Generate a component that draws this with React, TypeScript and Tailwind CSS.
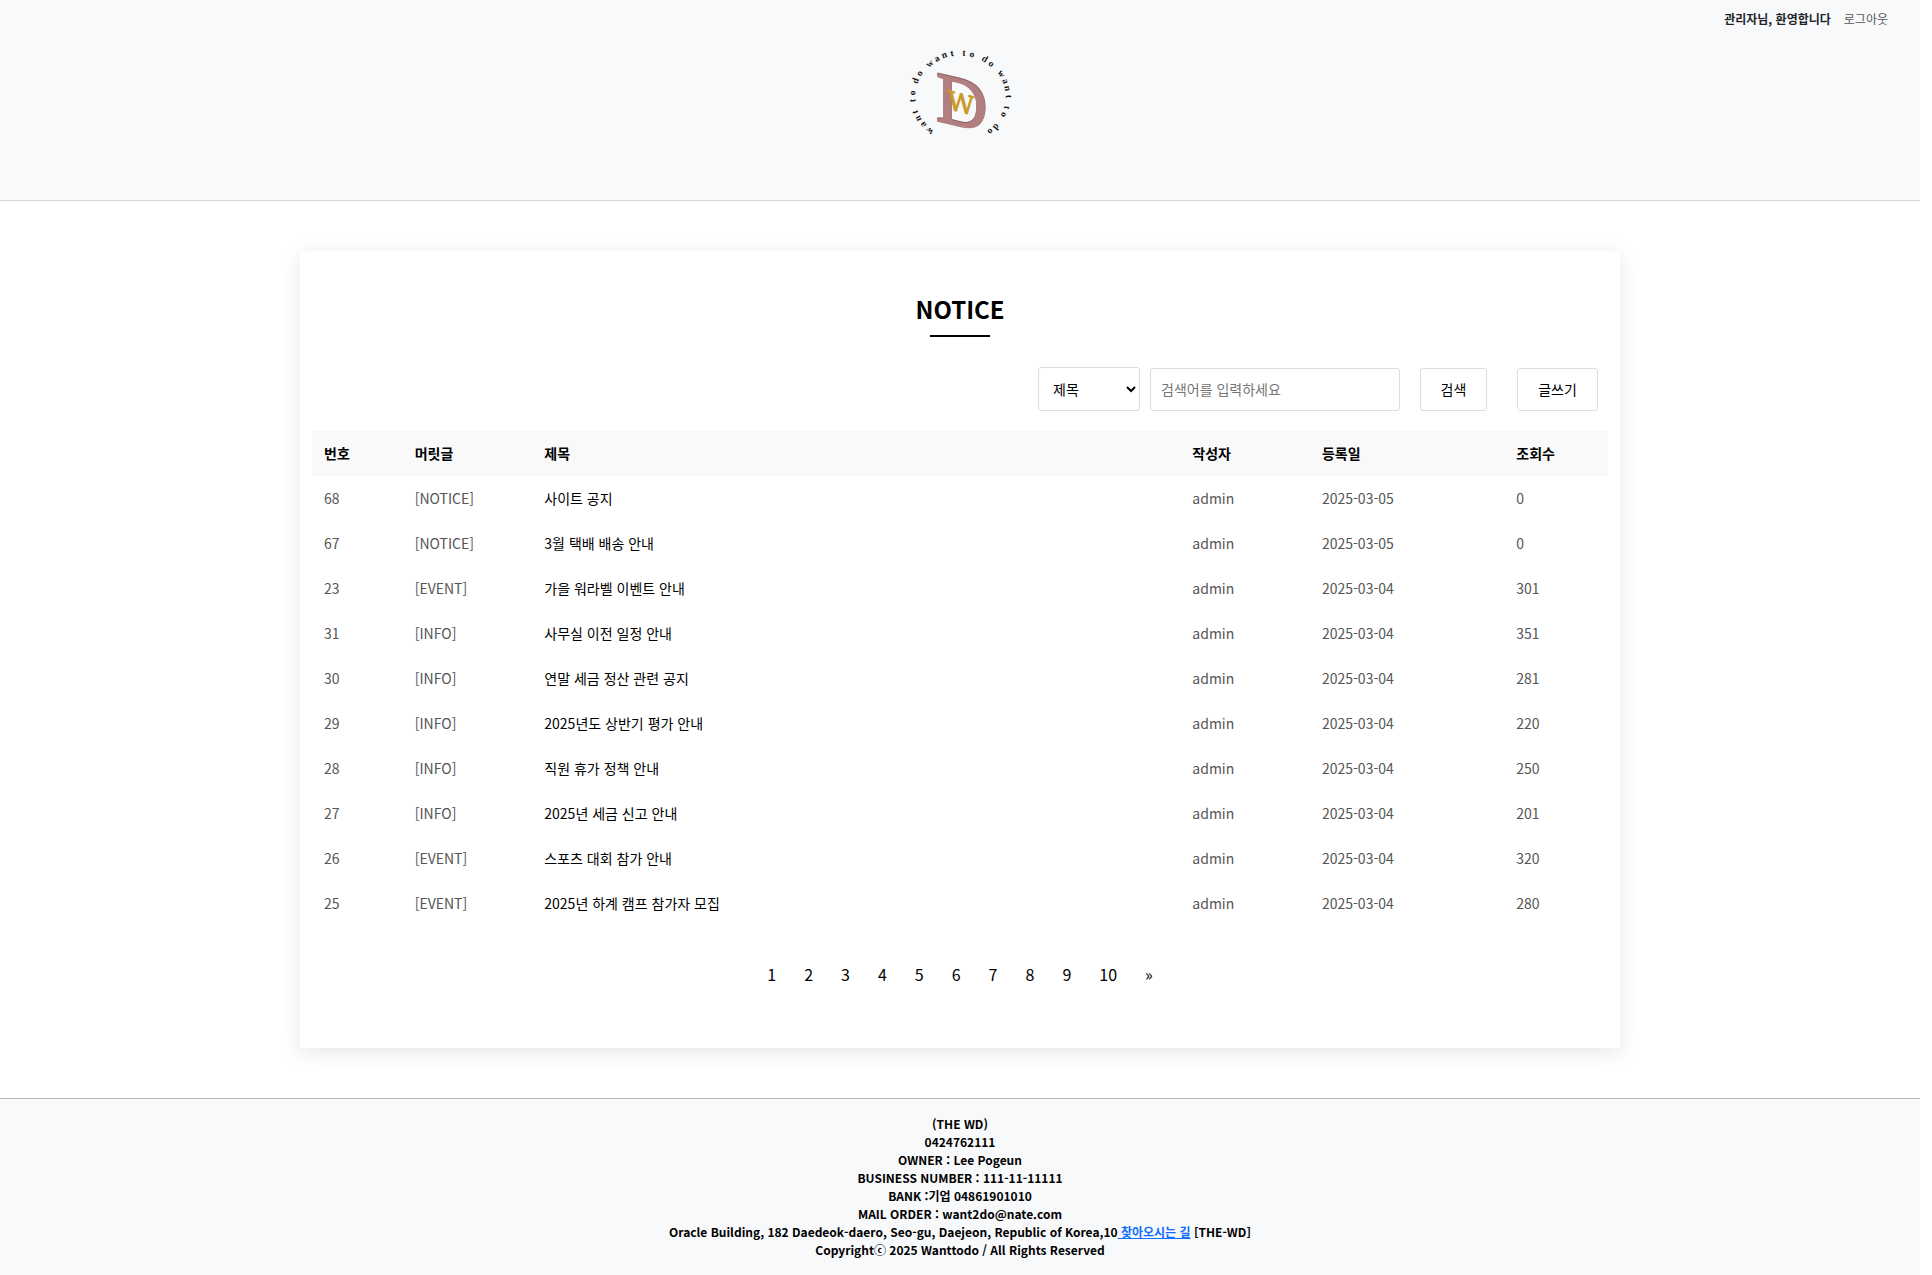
import React from "react";

const rows: [string, string, string, string, string][] = [
  ["68", "[NOTICE]", "사이트 공지", "2025-03-05", "0"],
  ["67", "[NOTICE]", "3월 택배 배송 안내", "2025-03-05", "0"],
  ["23", "[EVENT]", "가을 워라벨 이벤트 안내", "2025-03-04", "301"],
  ["31", "[INFO]", "사무실 이전 일정 안내", "2025-03-04", "351"],
  ["30", "[INFO]", "연말 세금 정산 관련 공지", "2025-03-04", "281"],
  ["29", "[INFO]", "2025년도 상반기 평가 안내", "2025-03-04", "220"],
  ["28", "[INFO]", "직원 휴가 정책 안내", "2025-03-04", "250"],
  ["27", "[INFO]", "2025년 세금 신고 안내", "2025-03-04", "201"],
  ["26", "[EVENT]", "스포츠 대회 참가 안내", "2025-03-04", "320"],
  ["25", "[EVENT]", "2025년 하계 캠프 참가자 모집", "2025-03-04", "280"],
];

const pages = ["1", "2", "3", "4", "5", "6", "7", "8", "9", "10", "»"];

// Centre of each letter on the logo's ring
const ring: [string, number, number][] = [
  ["w", 40, 100.5], ["a", 33.5, 94.5], ["n", 28.5, 88.5], ["t", 25.5, 82],
  ["t", 23, 70.5], ["o", 23, 63],
  ["d", 26, 51], ["o", 30, 43.5],
  ["w", 40, 34], ["a", 47, 29], ["n", 54.5, 25.5], ["t", 62, 24],
  ["t", 74, 23.5], ["o", 82, 25],
  ["d", 94.5, 29.5], ["o", 101, 34],
  ["w", 111, 44], ["a", 115, 51.5], ["n", 117, 58.5], ["t", 118, 66.5],
  ["t", 116.5, 77.5], ["o", 113.5, 84.5],
  ["d", 106, 96.5], ["o", 100, 101],
];

function Logo() {
  return (
    <svg className="block h-[120px] w-[150px]" viewBox="0 0 150 120">
      <g fontFamily="'Liberation Serif', serif" fontWeight="700" fontSize="9.5" fill="#111" textAnchor="middle">
        {ring.map(([ch, x, y], i) => {
          const angle = (Math.atan2(y - 68, x - 70.5) * 180) / Math.PI + 90;
          return (
            <text key={i} transform={`translate(${x} ${y}) rotate(${angle.toFixed(1)})`} y="2.3">
              {ch}
            </text>
          );
        })}
      </g>
      <g fontFamily="'Liberation Serif', serif" fontSize="71" strokeWidth="1.8">
        <text transform="translate(46.3 89.5) skewY(13)" fill="#8d6063" stroke="#8d6063">D</text>
        <text transform="translate(46 90.5) skewY(13)" fill="#b27f80" stroke="#b27f80">D</text>
      </g>
      <text
        transform="translate(57.5 79) skewY(14)"
        fontFamily="'DejaVu Serif', serif"
        fontSize="26"
        fill="#cb9a27"
        stroke="#cb9a27"
        strokeWidth="0.9"
      >
        W
      </text>
    </svg>
  );
}

export default function App() {
  return (
    <div lang="ko" className="h-[1275px] w-[1932px] overflow-hidden bg-white font-['Noto_Sans_CJK_KR',sans-serif] text-black">
      <div className="flex h-full w-[1920px] flex-col">
        <header className="flex h-[201px] flex-col items-center border-b border-[#d5d8db] bg-[#f8f9fb]">
          <div className="flex h-[30px] items-end gap-[13px] self-end pr-[32px] text-[12px] leading-[22px]">
            <span className="font-bold text-[#212529]">관리자님, 환영합니다</span>
            <a className="text-[#555]">로그아웃</a>
          </div>
          <div className="ml-[10px]">
            <Logo />
          </div>
        </header>

        <main className="mx-auto mt-[50px] flex h-[797px] w-[1320px] flex-col bg-white px-3 shadow-[0_4px_20px_rgba(0,0,0,0.1)]">
          <h1 className="mt-10 text-center text-[24px] leading-[36px] font-bold">NOTICE</h1>
          <div className="mx-auto mt-2 h-[2px] w-[60px] bg-black" />

          <div className="mt-[30px] flex h-[44px] items-end justify-end pr-[10px] text-[14px]">
            <div className="flex h-[44px] w-[102px] items-center justify-between rounded-[3px] border border-[#ddd] pr-[3px] pl-[14px]">
              <span>제목</span>
              <svg className="h-[10px] w-[10px]" viewBox="0 0 10 10" fill="none" stroke="#000" strokeWidth="2">
                <path d="M1 3 L5 7 L9 3" />
              </svg>
            </div>
            <div className="ml-[10px] flex h-[43px] w-[250px] items-center rounded-[3px] border border-[#ddd] pl-[10px] text-[#757575]">
              검색어를 입력하세요
            </div>
            <button className="ml-[20px] h-[43px] w-[67px] rounded-[3px] border border-[#ddd]">검색</button>
            <button className="ml-[30px] h-[43px] w-[81px] rounded-[3px] border border-[#ddd]">글쓰기</button>
          </div>

          <table className="mt-5 w-full table-fixed border-collapse text-left text-[14px] leading-[21px]">
            <colgroup>
              <col className="w-[7%]" />
              <col className="w-[10%]" />
              <col className="w-[50%]" />
              <col className="w-[10%]" />
              <col className="w-[15%]" />
              <col className="w-[8%]" />
            </colgroup>
            <thead>
              <tr className="h-[45px] bg-[#f9f9f9]">
                {["번호", "머릿글", "제목", "작성자", "등록일", "조회수"].map((h) => (
                  <th key={h} className="px-3 font-bold">{h}</th>
                ))}
              </tr>
            </thead>
            <tbody>
              {rows.map(([no, tag, title, date, views]) => (
                <tr key={no} className="h-[45px] text-[#555]">
                  <td className="px-3">{no}</td>
                  <td className="px-3">{tag}</td>
                  <td className="px-3 text-black">{title}</td>
                  <td className="px-3">admin</td>
                  <td className="px-3">{date}</td>
                  <td className="px-3">{views}</td>
                </tr>
              ))}
            </tbody>
          </table>

          <nav className="mt-[36px] flex justify-center text-[16px] leading-[24px]">
            {pages.map((p) => (
              <a key={p} className="px-[14px]">{p}</a>
            ))}
          </nav>
        </main>

        <footer className="mt-auto h-[177px] border-t border-[#b9b9b9] bg-[#f8f9fb] pt-[16px] text-center text-[12px] leading-[18px] font-bold">
          <p>(THE WD)</p>
          <p>0424762111</p>
          <p>OWNER : Lee Pogeun</p>
          <p>BUSINESS NUMBER : 111-11-11111</p>
          <p>BANK :기업 04861901010</p>
          <p>MAIL ORDER : want2do@nate.com</p>
          <p>
            Oracle Building, 182 Daedeok-daero, Seo-gu, Daejeon, Republic of Korea,10
            <a className="text-[#0d6efd] underline">&nbsp;찾아오시는 길</a> [THE-WD]
          </p>
          <p>Copyrightⓒ 2025 Wanttodo / All Rights Reserved</p>
        </footer>
      </div>
    </div>
  );
}
